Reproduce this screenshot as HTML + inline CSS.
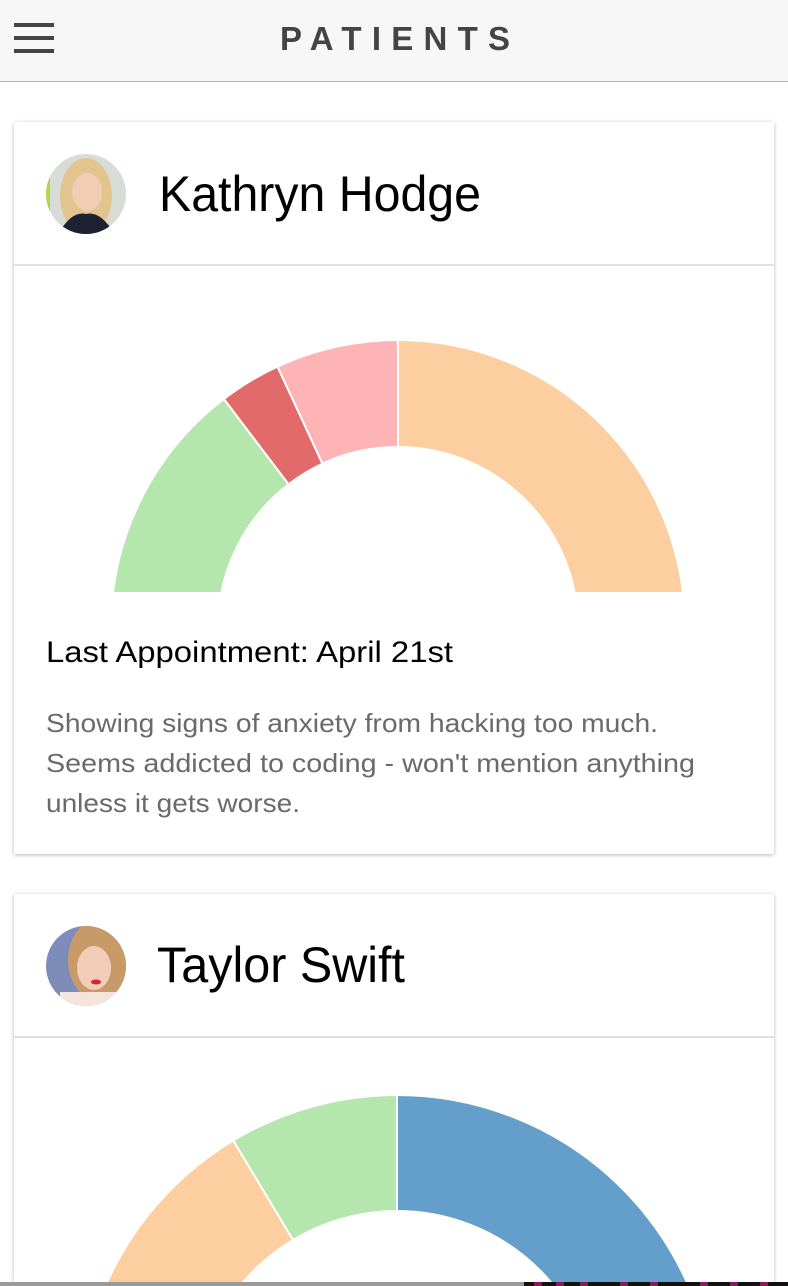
<!DOCTYPE html>
<html><head><meta charset="utf-8"><style>
html,body{margin:0;padding:0;width:788px;height:1286px;overflow:hidden;background:#fff;font-family:"Liberation Sans",Arial,sans-serif}
.hdr{position:absolute;left:0;top:0;width:788px;height:81px;background:#f7f7f7;border-bottom:1px solid #b5b5b5}
.card{position:absolute;left:14px;width:760px;background:#fff;box-shadow:0 1px 4px rgba(0,0,0,.28);border-radius:2px}
.line{position:absolute;left:0;width:760px;height:2px;background:#e0e0e0}
svg{position:absolute;left:0;top:0}
</style></head><body>
<div class="hdr"></div>
<div class="card" style="top:122px;height:732px"><div class="line" style="top:142px"></div></div>
<div class="card" style="top:894px;height:388px"><div class="line" style="top:142px"></div></div>
<svg width="788" height="1286" viewBox="0 0 788 1286">
<defs>
<clipPath id="c1"><rect x="0" y="280" width="788" height="312"/></clipPath>
<clipPath id="c2"><rect x="14" y="1040" width="760" height="242"/></clipPath>
<clipPath id="a1"><circle cx="86" cy="194" r="40"/></clipPath>
<clipPath id="a2"><circle cx="86" cy="966" r="40"/></clipPath>
</defs>
<rect x="14" y="23" width="40" height="4" fill="#444"/>
<rect x="14" y="36" width="40" height="4" fill="#444"/>
<rect x="14" y="49" width="40" height="4" fill="#444"/>
<text x="395" y="50" text-anchor="middle" font-size="33" font-weight="bold" fill="#444" textLength="230" lengthAdjust="spacing">PATIENTS</text>
<g clip-path="url(#a1)">
<rect x="40" y="150" width="90" height="90" fill="#d8dcd6"/>
<rect x="40" y="150" width="10" height="90" fill="#b6d34a"/>
<ellipse cx="86" cy="196" rx="26" ry="38" fill="#e2c58e"/>
<ellipse cx="87" cy="192" rx="15" ry="19" fill="#f2cdb5"/>
<path d="M55 240 Q70 210 86 214 Q102 210 118 240Z" fill="#1e2230"/>
</g>
<text x="159" y="211" font-size="50" fill="#000" textLength="322" lengthAdjust="spacingAndGlyphs">Kathryn Hodge</text>
<g clip-path="url(#c1)" stroke="#fff" stroke-width="2">
<path d="M111 627 A287 287 0 0 1 223.9 399 L288.6 484.3 A180 180 0 0 0 218 627Z" fill="#b4e6ad"/>
<path d="M223.9 399 A287 287 0 0 1 277.5 366.6 L322.4 463.6 A180 180 0 0 0 288.6 484.3Z" fill="#e26a6a"/>
<path d="M277.5 366.6 A287 287 0 0 1 398 340 L398 447 A180 180 0 0 0 322.4 463.6Z" fill="#feb4b4"/>
<path d="M398 340 A287 287 0 0 1 685 627 L578 627 A180 180 0 0 0 398 447Z" fill="#fdcea0"/>
</g>
<text x="46" y="662" font-size="30" fill="#000" textLength="407" lengthAdjust="spacingAndGlyphs">Last Appointment: April 21st</text>
<g font-size="26" fill="#6a6a6a">
<text x="46" y="732" textLength="612" lengthAdjust="spacingAndGlyphs">Showing signs of anxiety from hacking too much.</text>
<text x="46" y="772" textLength="649" lengthAdjust="spacingAndGlyphs">Seems addicted to coding - won't mention anything</text>
<text x="46" y="812" textLength="254" lengthAdjust="spacingAndGlyphs">unless it gets worse.</text>
</g>
<g clip-path="url(#a2)">
<rect x="40" y="920" width="90" height="90" fill="#7d8cb8"/>
<ellipse cx="98" cy="960" rx="30" ry="40" fill="#c79a68"/>
<ellipse cx="94" cy="968" rx="17" ry="22" fill="#f1cdb8"/>
<rect x="60" y="992" width="60" height="20" fill="#f4e4dc"/>
<ellipse cx="96" cy="982" rx="5" ry="2.5" fill="#d0282c"/>
</g>
<text x="157" y="982" font-size="50" fill="#000" textLength="248" lengthAdjust="spacingAndGlyphs">Taylor Swift</text>
<g clip-path="url(#c2)" stroke="#fff" stroke-width="2">
<path d="M397 1095 A318 318 0 0 1 715 1413 L599 1413 A202 202 0 0 0 397 1211Z" fill="#639fca"/>
<path d="M233.2 1140.5 A318 318 0 0 1 397 1095 L397 1211 A202 202 0 0 0 293 1240Z" fill="#b4e6ad"/>
<path d="M79 1413 A318 318 0 0 1 233.2 1140.5 L293 1240 A202 202 0 0 0 195 1413Z" fill="#fdcea0"/>
</g>
<rect x="0" y="1282" width="524" height="4" fill="#999"/>
<rect x="524" y="1282" width="264" height="4" fill="#111"/>
<g fill="#8a1a5a"><rect x="534" y="1282" width="8" height="4"/><rect x="556" y="1282" width="8" height="4"/><rect x="580" y="1282" width="8" height="4"/><rect x="620" y="1282" width="8" height="4"/><rect x="650" y="1282" width="8" height="4"/><rect x="700" y="1282" width="8" height="4"/><rect x="730" y="1282" width="8" height="4"/><rect x="760" y="1282" width="8" height="4"/></g>
</svg>
</body></html>
